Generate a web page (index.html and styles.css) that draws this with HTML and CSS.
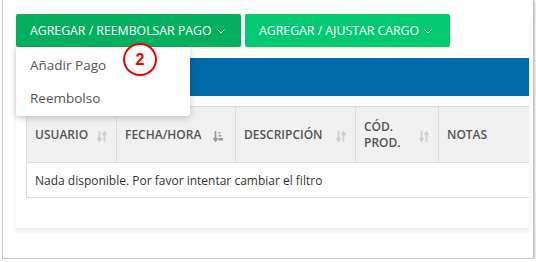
FILE: index.html
```html
<!DOCTYPE html>
<html>
  <head>
    <title>Pagos</title>
    <link rel="stylesheet" href="styles.css">
  </head>
  <body>
    <div class="window">
      <div class="card">
        <div class="actions">
          <div class="btn-wrap">
            <button class="btn btn-dark">AGREGAR / REEMBOLSAR PAGO
              <svg class="caret" width="8" height="5" viewBox="0 0 8 5"><polyline points="0.5,0.5 4,4 7.5,0.5" fill="none" stroke="#d8f5e6" stroke-width="1"/></svg>
            </button>
            <ul class="menu">
              <li>Añadir Pago</li>
              <li>Reembolso</li>
            </ul>
            <div class="marker">2</div>
          </div>
          <button class="btn btn-light">AGREGAR / AJUSTAR CARGO
            <svg class="caret" width="8" height="5" viewBox="0 0 8 5"><polyline points="0.5,0.5 4,4 7.5,0.5" fill="none" stroke="#d8f5e6" stroke-width="1"/></svg>
          </button>
        </div>
        <div class="bar"></div>
        <table class="grid">
          <colgroup>
            <col class="c1"><col class="c2"><col class="c3"><col class="c4"><col>
          </colgroup>
          <thead>
            <tr>
              <th>USUARIO <span class="sort"><svg width="10" height="11" viewBox="0 0 10 11"><path d="M2.5 0v9M0.5 7l2 3 2-3M7.5 11V2M5.5 4l2-3 2 3" fill="none" stroke="#cfcfcf" stroke-width="1.7"/></svg></span></th>
              <th class="active">FECHA/HORA <span class="sort"><svg width="10" height="11" viewBox="0 0 10 11"><path d="M2.5 0v9M0.5 7l2 3 2-3" fill="none" stroke="#9a9a9a" stroke-width="1.7"/><path d="M5.5 1h2v1.6h-2zM5.5 4h3v1.6h-3zM5.5 7h4.5v2.6H5.5z" fill="#9a9a9a"/></svg></span></th>
              <th>DESCRIPCIÓN <span class="sort"><svg width="10" height="11" viewBox="0 0 10 11"><path d="M2.5 0v9M0.5 7l2 3 2-3M7.5 11V2M5.5 4l2-3 2 3" fill="none" stroke="#cfcfcf" stroke-width="1.7"/></svg></span></th>
              <th><span class="two">CÓD.<br>PROD.</span> <span class="sort"><svg width="10" height="11" viewBox="0 0 10 11"><path d="M2.5 0v9M0.5 7l2 3 2-3M7.5 11V2M5.5 4l2-3 2 3" fill="none" stroke="#cfcfcf" stroke-width="1.7"/></svg></span></th>
              <th>NOTAS</th>
            </tr>
          </thead>
          <tbody>
            <tr>
              <td colspan="5">Nada disponible. Por favor intentar cambiar el filtro</td>
            </tr>
          </tbody>
        </table>
      </div>
    </div>
  </body>
</html>
```

FILE: styles.css
```css
body {
  margin: 0;
  font-family: "Open Sans", sans-serif;
  background: #fff;
}
.window {
  width: 532px;
  height: 259px;
  margin-left: 2px;
  border: 1px solid #c4c4c4;
  border-top: none;
  box-shadow: 1px 1px 2px rgba(0, 0, 0, 0.25);
  padding: 14px 4px 0 13px;
  box-sizing: border-box;
}
.card {
  width: 513px;
  padding-bottom: 30px;
  box-shadow: 0 3px 4px rgba(0, 0, 0, 0.08);
}
.actions {
  display: flex;
  gap: 4px;
}
.btn-wrap {
  position: relative;
}
.btn {
  height: 33px;
  border: none;
  border-radius: 2px;
  color: #fff;
  font-family: "Open Sans", sans-serif;
  font-size: 12.3px;
  white-space: nowrap;
  padding: 0 0 0 14px;
  display: flex;
  align-items: center;
  justify-content: flex-start;
  gap: 5px;
  box-sizing: border-box;
  box-shadow: 0 1px 2px rgba(0, 0, 0, 0.15);
}
.btn-dark {
  width: 225px;
  background: #04b05d;
}
.btn-light {
  width: 205px;
  background: #05ca72;
}
.caret {
  margin-top: 1px;
}
.menu {
  position: absolute;
  top: 33px;
  left: 0;
  width: 174px;
  height: 69px;
  margin: 0;
  padding: 0;
  list-style: none;
  background: #fff;
  border-radius: 0 0 3px 3px;
  box-shadow: 0 2px 6px rgba(0, 0, 0, 0.22);
  z-index: 2;
}
.menu li {
  height: 34px;
  line-height: 34px;
  padding-left: 14px;
  font-size: 13.5px;
  color: #555;
}
.menu li:first-child {
  line-height: 37px;
}
.marker {
  position: absolute;
  left: 107px;
  top: 29px;
  width: 30px;
  height: 29px;
  border: 2.5px solid #f20000;
  border-radius: 50%;
  color: #f20000;
  font-family: "Liberation Sans", Arial, sans-serif;
  font-weight: bold;
  font-size: 16px;
  line-height: 29px;
  text-align: center;
  background: #fff;
  z-index: 3;
}
.bar {
  height: 38px;
  margin-top: 11px;
  background: #0069a7;
}
.grid {
  margin: 10px 0 0 10px;
  width: 503px;
  table-layout: fixed;
  border-collapse: collapse;
  font-size: 12px;
  color: #555;
}
.c1 { width: 90px; }
.c2 { width: 119px; }
.c3 { width: 120px; }
.c4 { width: 83px; }
.grid th {
  height: 55px;
  background: #f1f1f1;
  border: 1px solid #dddddd;
  text-align: left;
  font-weight: 600;
  padding: 0 8px;
  position: relative;
  white-space: nowrap;
}
.grid th:last-child {
  border-right: none;
}
.two {
  display: inline-block;
  line-height: 16px;
}
.sort {
  position: absolute;
  right: 9px;
  top: 22px;
}
.active .sort {
  right: 12px;
}
.grid td {
  height: 34px;
  padding: 0 8px;
  border-left: 1px solid #dddddd;
  border-bottom: 1px solid #dddddd;
  font-size: 12px;
  color: #333;
}
```
